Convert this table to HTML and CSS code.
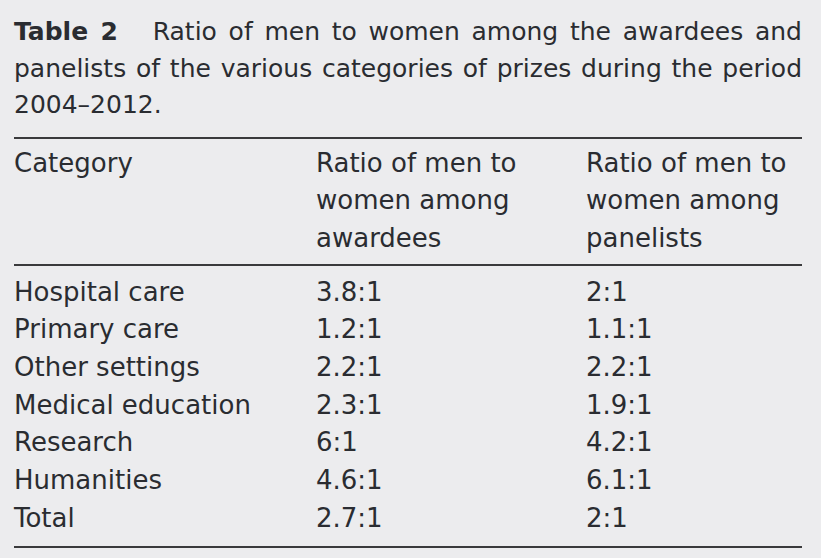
FILE: index.html
```html
<!DOCTYPE html>
<html>
<head>
<meta charset="utf-8">
<link rel="stylesheet" href="styles.css">
</head>
<body>
<div class="page">
  <p class="caption"><span class="label">Table 2</span> Ratio of men to women among the awardees and panelists of the various categories of prizes during the period 2004&#8211;2012.</p>
  <table class="data">
    <colgroup>
      <col class="c1"><col class="c2"><col class="c3">
    </colgroup>
    <thead>
      <tr>
        <th>Category</th>
        <th>Ratio of men to<br>women among<br>awardees</th>
        <th>Ratio of men to<br>women among<br>panelists</th>
      </tr>
    </thead>
    <tbody>
      <tr><td>Hospital care</td><td>3.8:1</td><td>2:1</td></tr>
      <tr><td>Primary care</td><td>1.2:1</td><td>1.1:1</td></tr>
      <tr><td>Other settings</td><td>2.2:1</td><td>2.2:1</td></tr>
      <tr><td>Medical education</td><td>2.3:1</td><td>1.9:1</td></tr>
      <tr><td>Research</td><td>6:1</td><td>4.2:1</td></tr>
      <tr><td>Humanities</td><td>4.6:1</td><td>6.1:1</td></tr>
      <tr><td>Total</td><td>2.7:1</td><td>2:1</td></tr>
    </tbody>
  </table>
</div>
</body>
</html>
```
FILE: styles.css
```css
html, body {
  margin: 0;
  padding: 0;
  background: #ececee;
}
.page {
  width: 788px;
  padding: 14px 0 0 14px;
  color: #2a2c31;
  font-family: "DejaVu Sans", "Lato", sans-serif;
  font-size: 26px;
}
.caption {
  margin: 0;
  font-size: 25px;
  line-height: 36.5px;
  text-align: justify;
}
.label {
  font-weight: bold;
  margin-right: 23px;
}
.data {
  width: 788px;
  margin-top: 13px;
  border-collapse: collapse;
  border-top: 2px solid #3a3a3c;
  border-bottom: 2px solid #3a3a3c;
}
.c1 { width: 302px; }
.c2 { width: 270px; }
.c3 { width: 216px; }
.data th, .data td {
  padding: 0;
  text-align: left;
  font-weight: normal;
  vertical-align: top;
  line-height: 37.7px;
}
.data thead th {
  padding: 6px 0 6px;
  border-bottom: 2px solid #3a3a3c;
}
.data tbody tr:first-child td {
  padding-top: 8px;
}
.data tbody tr:last-child td {
  padding-bottom: 8px;
}
```
